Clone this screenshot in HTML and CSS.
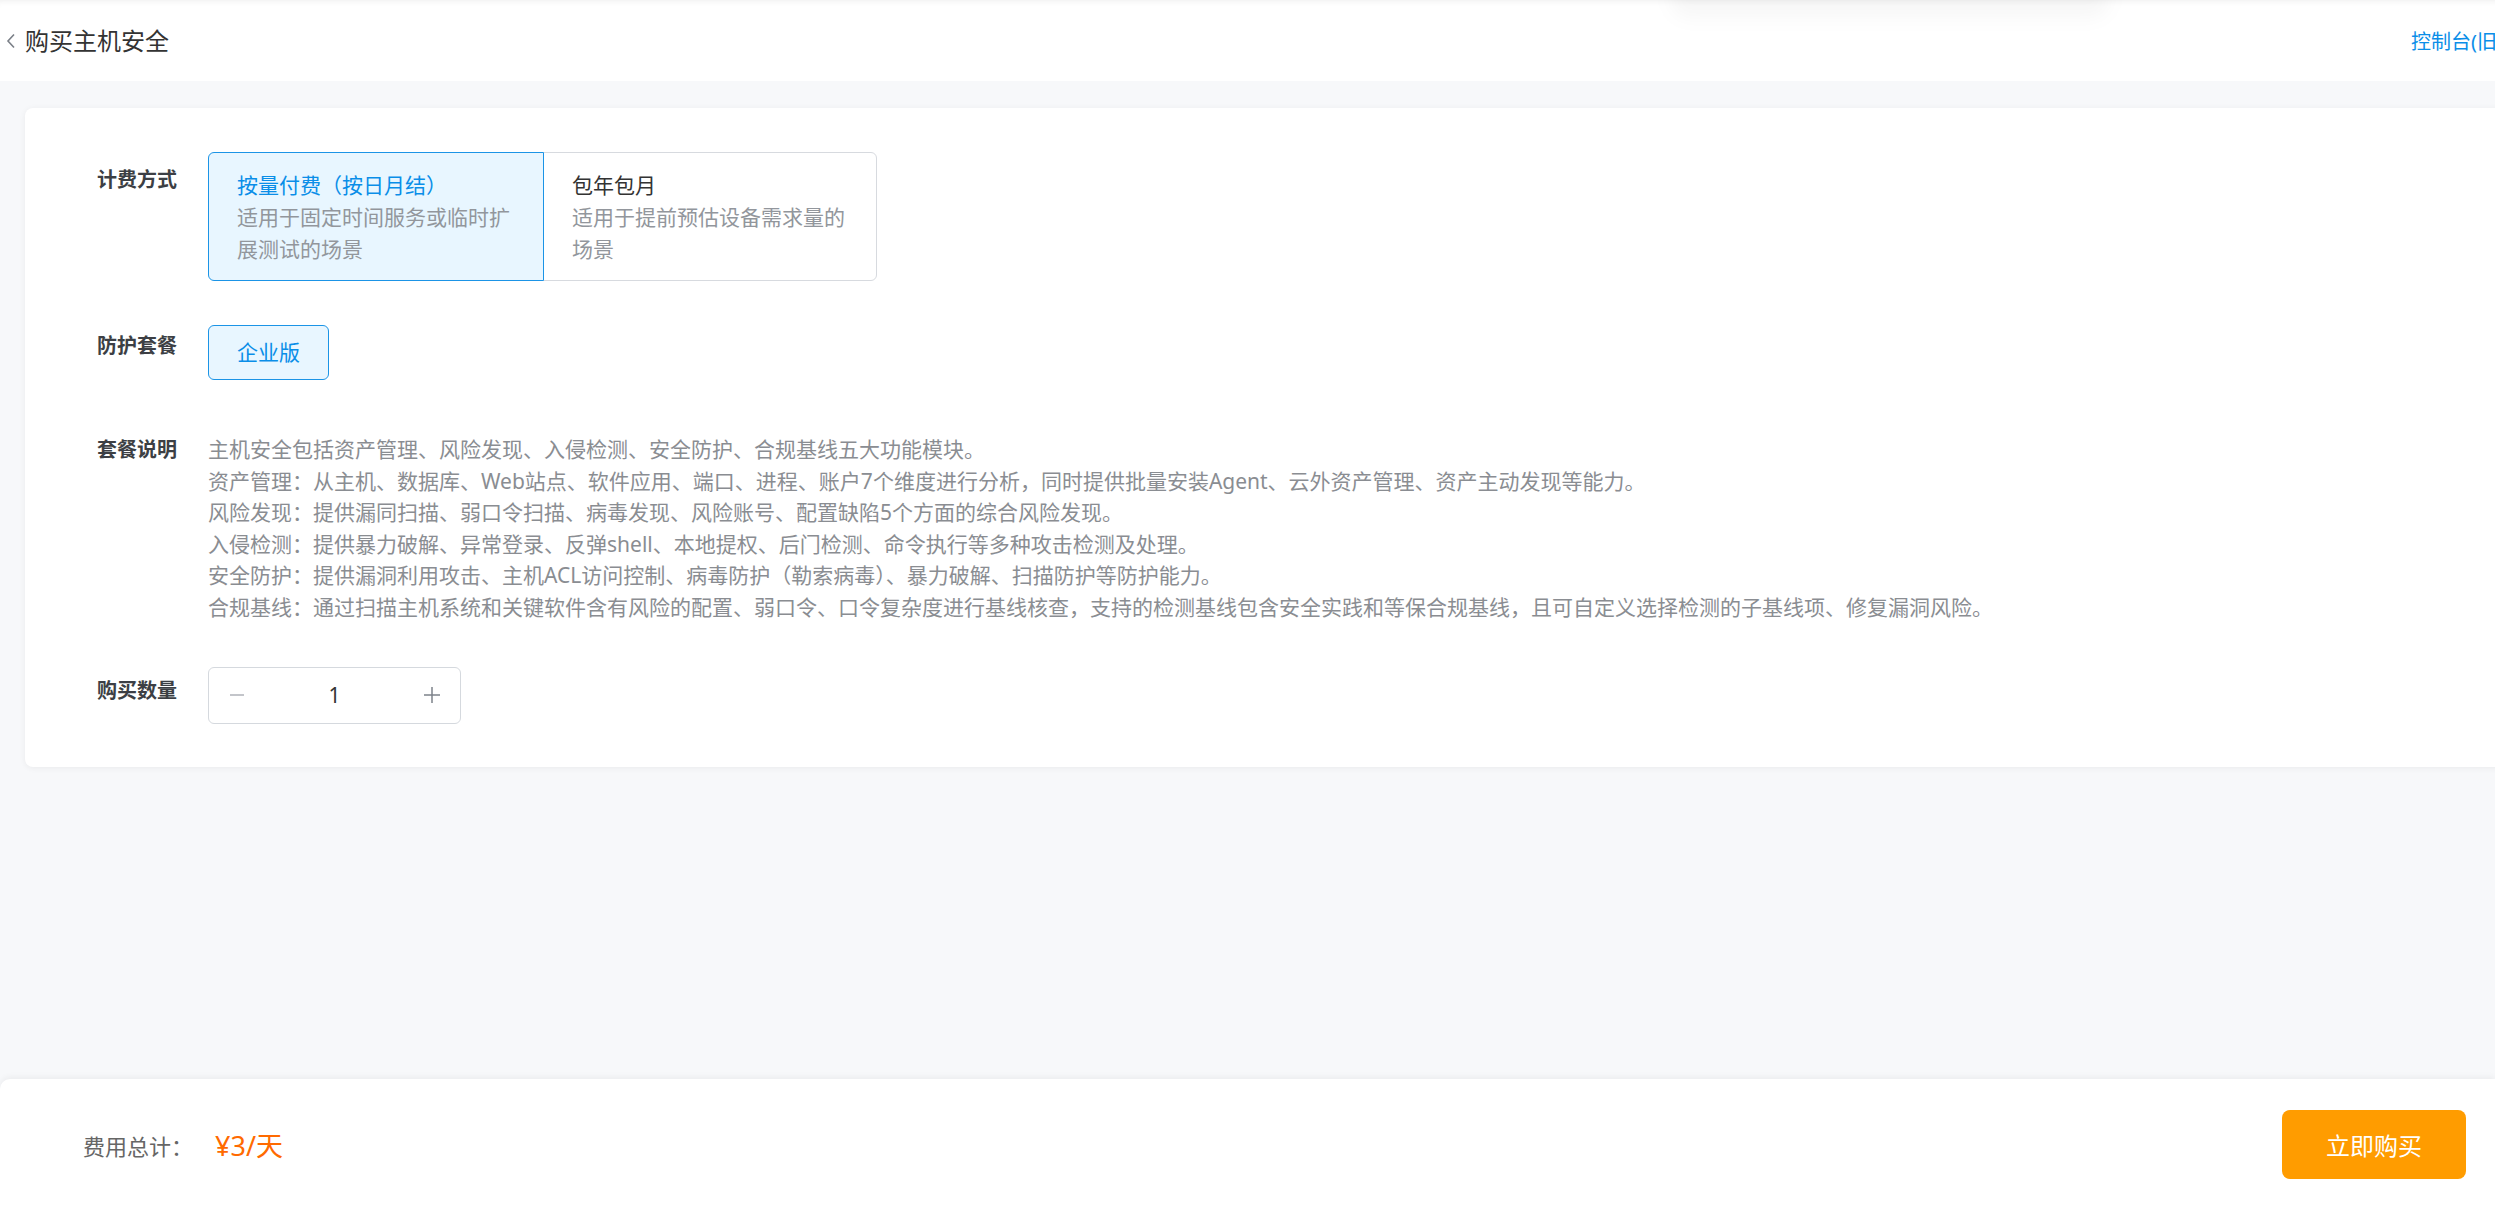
FILE: index.html
```html
<!DOCTYPE html>
<html lang="zh-CN">
<head>
  <meta charset="UTF-8">
  <title>购买主机安全</title>
  <link rel="stylesheet" href="styles.css">
</head>
<body>
<div class="page">

  <div class="topbar">
    <div class="topbar-left">
      <svg class="back-icon" width="10" height="16" viewBox="0 0 10 16">
        <polyline points="8,1.5 2,8 8,14.5" fill="none" stroke="#7a7f87" stroke-width="1.6"/>
      </svg>
      <span class="page-title">购买主机安全</span>
    </div>
    <a class="console-link" href="#">控制台(旧版)</a>
    <div class="drop-shadow"></div>
  </div>

  <div class="main">
    <div class="card">

      <div class="form-row">
        <div class="form-label label-billing">计费方式</div>
        <div class="form-field">
          <div class="plan-options">
            <div class="plan-option active">
              <div class="plan-name">按量付费（按日月结）</div>
              <div class="plan-desc">适用于固定时间服务或临时扩展测试的场景</div>
            </div>
            <div class="plan-option">
              <div class="plan-name">包年包月</div>
              <div class="plan-desc">适用于提前预估设备需求量的场景</div>
            </div>
          </div>
        </div>
      </div>

      <div class="form-row">
        <div class="form-label label-package">防护套餐</div>
        <div class="form-field">
          <div class="tag-btn active">企业版</div>
        </div>
      </div>

      <div class="form-row row-desc">
        <div class="form-label">套餐说明</div>
        <div class="form-field package-desc">
          <p>主机安全包括资产管理、风险发现、入侵检测、安全防护、合规基线五大功能模块。</p>
          <p>资产管理：从主机、数据库、Web站点、软件应用、端口、进程、账户7个维度进行分析，同时提供批量安装Agent、云外资产管理、资产主动发现等能力。</p>
          <p>风险发现：提供漏同扫描、弱口令扫描、病毒发现、风险账号、配置缺陷5个方面的综合风险发现。</p>
          <p>入侵检测：提供暴力破解、异常登录、反弹shell、本地提权、后门检测、命令执行等多种攻击检测及处理。</p>
          <p>安全防护：提供漏洞利用攻击、主机ACL访问控制、病毒防护（勒索病毒）、暴力破解、扫描防护等防护能力。</p>
          <p>合规基线：通过扫描主机系统和关键软件含有风险的配置、弱口令、口令复杂度进行基线核查，支持的检测基线包含安全实践和等保合规基线，且可自定义选择检测的子基线项、修复漏洞风险。</p>
        </div>
      </div>

      <div class="form-row">
        <div class="form-label label-count">购买数量</div>
        <div class="form-field">
          <div class="stepper">
            <span class="stepper-btn">
              <svg width="16" height="16" viewBox="0 0 16 16"><line x1="1" y1="8" x2="15" y2="8" stroke="#a9adb3" stroke-width="1.4"/></svg>
            </span>
            <span class="stepper-value">1</span>
            <span class="stepper-btn">
              <svg width="18" height="18" viewBox="0 0 18 18"><line x1="1" y1="9" x2="17" y2="9" stroke="#7d828a" stroke-width="1.5"/><line x1="9" y1="1" x2="9" y2="17" stroke="#7d828a" stroke-width="1.5"/></svg>
            </span>
          </div>
        </div>
      </div>

    </div>
  </div>

  <div class="footer-bar">
    <div class="total">
      <span class="total-label">费用总计：</span>
      <span class="total-price">¥3/天</span>
    </div>
    <button class="buy-btn">立即购买</button>
  </div>

</div>
</body>
</html>
```

FILE: styles.css
```css
html, body {
  margin: 0;
  padding: 0;
  height: 100%;
  overflow: hidden;
}

body {
  font-family: "Noto Sans", "Noto Sans CJK SC", sans-serif;
  background-color: #f7f8fa;
  color: #333;
}

.page {
  display: flex;
  flex-direction: column;
  height: 100vh;
}

/* top bar */
.topbar {
  position: relative;
  display: flex;
  align-items: center;
  justify-content: space-between;
  width: 2560px;
  height: 81px;
  padding: 0 37px 0 6px;
  box-sizing: border-box;
  background: #fff;
  box-shadow: inset 0 6px 6px -5px rgba(0, 0, 0, 0.07);
  flex: none;
  overflow: hidden;
}

.topbar-left {
  display: flex;
  align-items: center;
  gap: 9px;
}

.back-icon {
  display: block;
}

.page-title {
  font-size: 24px;
  line-height: 32px;
  color: #333;
}

.console-link {
  font-size: 20px;
  color: #0a8ee8;
  text-decoration: none;
}

/* faint shade of the menu hanging above the bar */
.drop-shadow {
  position: absolute;
  left: 1670px;
  top: -22px;
  width: 440px;
  height: 40px;
  border-radius: 24px;
  background: rgba(0, 0, 0, 0.03);
  filter: blur(9px);
}

/* main form card */
.main {
  flex: 1;
  width: 2560px;
  padding: 27px 0 0 25px;
  box-sizing: border-box;
}

.card {
  background: #fff;
  border-radius: 8px;
  box-shadow: 0 1px 6px rgba(0, 0, 0, 0.06);
  padding: 44px 0 43px 72px;
}

.form-row {
  display: flex;
  align-items: flex-start;
}

.form-row + .form-row {
  margin-top: 44px;
}

.form-row.row-desc {
  margin-top: 54px;
}

.form-row.row-desc + .form-row {
  margin-top: 43px;
}

.form-label {
  flex: none;
  width: 111px;
  font-size: 20px;
  line-height: 32px;
  font-weight: bold;
  color: #3c3f44;
}

.label-billing { padding-top: 12px; }
.label-package { padding-top: 5px; }
.label-count { padding-top: 8px; }

.form-field {
  flex: 1;
}

/* billing options */
.plan-options {
  display: flex;
}

.plan-option {
  width: 336px;
  box-sizing: border-box;
  padding: 16px 28px 15px;
  border: 1px solid #d7dadf;
  background: #fff;
}

.plan-option:first-child {
  border-radius: 6px 0 0 6px;
}

.plan-option:last-child {
  width: 334px;
  margin-left: -1px;
  border-radius: 0 6px 6px 0;
}

.plan-option.active {
  position: relative;
  border-color: #1b94e6;
  background: #e8f6ff;
  z-index: 1;
}

.plan-name {
  font-size: 21px;
  line-height: 32px;
  color: #333;
}

.plan-option.active .plan-name {
  color: #0a8ee8;
}

.plan-desc {
  font-size: 21px;
  line-height: 32px;
  color: #92969c;
}

.tag-btn {
  display: inline-block;
  padding: 11px 28px;
  font-size: 21px;
  line-height: 31px;
  border: 1px solid #d7dadf;
  border-radius: 6px;
}

.tag-btn.active {
  border-color: #1b94e6;
  background: #e8f6ff;
  color: #0a8ee8;
}

.package-desc p {
  margin: 0;
  font-size: 21px;
  line-height: 31.6px;
  color: #8a8d92;
  white-space: nowrap;
}

/* quantity stepper */
.stepper {
  display: inline-flex;
  align-items: center;
  width: 253px;
  height: 57px;
  box-sizing: border-box;
  border: 1px solid #d5d9de;
  border-radius: 6px;
}

.stepper-btn {
  display: flex;
  align-items: center;
  justify-content: center;
  width: 56px;
  height: 100%;
}

.stepper-value {
  flex: 1;
  text-align: center;
  font-size: 21px;
  color: #333;
}

/* bottom bar */
.footer-bar {
  flex: none;
  display: flex;
  align-items: center;
  justify-content: space-between;
  height: 131px;
  padding: 0 29px 0 83px;
  background: #fff;
  border-radius: 10px 0 0 0;
  box-shadow: 0 -2px 6px rgba(0, 0, 0, 0.05);
}

.total {
  display: flex;
  align-items: center;
  gap: 22px;
}

.total-label {
  font-size: 22px;
  color: #666;
}

.total-price {
  font-size: 27px;
  color: #ff6a00;
}

.buy-btn {
  width: 184px;
  height: 69px;
  border: none;
  border-radius: 8px;
  background: #ff9c00;
  color: #fff;
  font-family: inherit;
  font-size: 24px;
  cursor: pointer;
}
```
